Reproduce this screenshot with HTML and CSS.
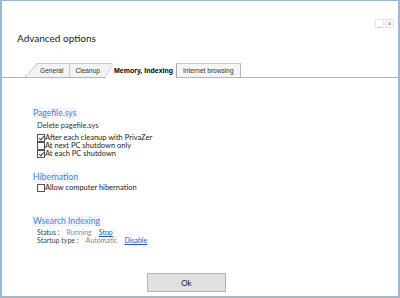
FILE: index.html
```html
<!DOCTYPE html>
<html lang="en">
<head>
    <meta charset="UTF-8">
    <title>Advanced options</title>
    <link rel="stylesheet" href="styles.css">
</head>
<body>
    <div class="window">
        <div class="controls">
            <span class="ctl ctl-min">_</span>
            <span class="ctl ctl-close">&#x2715;</span>
        </div>
        <h1 class="title">Advanced options</h1>
        <div class="tabs">
            <div class="tab tab-general">General</div>
            <div class="tab tab-cleanup">Cleanup</div>
            <div class="tab tab-active">Memory, Indexing</div>
            <div class="tab tab-internet">Internet browsing</div>
        </div>
        <div class="content">
            <div class="section section-pagefile">
                <div class="heading">Pagefile.sys</div>
                <div class="label">Delete pagefile.sys</div>
                <label class="check"><span class="box on"></span>After each cleanup with PrivaZer</label>
                <label class="check"><span class="box"></span>At next PC shutdown only</label>
                <label class="check"><span class="box on"></span>At each PC shutdown</label>
            </div>
            <div class="section section-hibernation">
                <div class="heading">Hibernation</div>
                <label class="check"><span class="box"></span>Allow computer hibernation</label>
            </div>
            <div class="section section-wsearch">
                <div class="heading">Wsearch Indexing</div>
                <div class="info"><span class="key">Status :</span><span class="val">Running</span><a class="link">Stop</a></div>
                <div class="info"><span class="key">Startup type :</span><span class="val">Automatic</span><a class="link">Disable</a></div>
            </div>
        </div>
        <div class="footer">
            <button class="btn-ok">Ok</button>
        </div>
    </div>
</body>
</html>
```

FILE: styles.css
```css
body {
    margin: 0;
    background-color: #fff;
    font-family: Lato, 'Open Sans', sans-serif;
}

.window {
    position: relative;
    width: 400px;
    height: 298px;
    box-sizing: border-box;
    border: 1px solid #9ab9d8;
    border-left-width: 2px;
    border-right-width: 2px;
    border-bottom: 2px solid #a9b6c2;
    background-color: #fff;
    display: flex;
    flex-direction: column;
}

.controls {
    position: absolute;
    top: 18px;
    right: 4px;
    display: flex;
    gap: 1px;
}

.ctl {
    width: 7px;
    height: 7px;
    border: 1px solid #e4e4e4;
    font-size: 6px;
    line-height: 7px;
    text-align: center;
    color: #888;
    font-family: 'DejaVu Sans', sans-serif;
}

.title {
    margin: 30px 0 0 15px;
    font-size: 10px;
    font-weight: normal;
    color: #222;
    line-height: 14px;
}

/* tabs */
.tabs {
    display: flex;
    align-items: flex-end;
    margin-top: 18px;
    padding-left: 23px;
    border-bottom: 1px solid #a8b8c8;
    height: 14px;
}

.tab {
    position: relative;
    font-family: 'Liberation Sans', Arial, sans-serif;
    font-size: 6.6px;
    color: #333;
    height: 13px;
    line-height: 13px;
    border-top: 1px solid #c8c8c8;
    background-color: #f3f3f3;
}

.tab-general {
    padding: 0 7px 0 15px;
    clip-path: polygon(12px 0, 100% 0, 100% 100%, 0 100%);
    background: linear-gradient(to bottom right, transparent calc(50% - 0.7px), #b4b4b4 50%, transparent calc(50% + 0.7px)) 0 0 / 12px 100% no-repeat, #f3f3f3;
}

.tab-cleanup {
    margin-left: -1px;
    padding: 0 12px 0 5px;
    border-left: 1px solid #c8c8c8;
}

.tab-active {
    z-index: 1;
    margin-left: -7px;
    margin-bottom: -1px;
    height: 15px;
    line-height: 15px;
    padding: 0 3px 0 9px;
    border-top: none;
    border-right: 1px solid #a8a8a8;
    font-weight: bold;
    font-size: 7px;
    color: #000;
    clip-path: polygon(8px 0, 100% 0, 100% 100%, 0 100%);
    background: linear-gradient(to bottom right, transparent calc(50% - 0.7px), #a8a8a8 50%, transparent calc(50% + 0.7px)) 0 0 / 8px 100% no-repeat, #fff;
}

.tab-internet {
    padding: 0 6px;
    border-right: 1px solid #b8b8b8;
    background-color: #f6f6f6;
}

/* content */
.content {
    flex: 1;
    padding: 30px 0 0 30px;
}

.section-pagefile {
    margin-bottom: 14px;
}

.section-hibernation {
    margin-bottom: 24px;
}

.heading {
    width: fit-content;
    font-size: 8.6px;
    color: #4683d6;
    background-color: #f2f6fc;
    line-height: 11px;
    padding: 0 1px;
    margin-bottom: 1px;
}

.label {
    font-size: 7.5px;
    color: #333;
    line-height: 11px;
    padding-left: 5px;
    margin-bottom: 2.5px;
}

.check {
    display: flex;
    align-items: center;
    font-size: 7.5px;
    color: #222;
    line-height: 8px;
    height: 8px;
    padding-left: 5px;
}

.box {
    width: 6px;
    height: 6px;
    border: 1px solid #555;
    background: #fff;
    position: relative;
}

.box.on::after {
    content: "";
    position: absolute;
    left: 2px;
    top: 0;
    width: 2px;
    height: 4px;
    border: solid #444;
    border-width: 0 1px 1px 0;
    transform: rotate(40deg);
}

.info {
    font-size: 7px;
    line-height: 8px;
    color: #444;
    padding-left: 5px;
    display: flex;
}

.heading + .info {
    margin-top: 1.5px;
}

.key {
    margin-right: 7px;
}

.val {
    color: #888;
    margin-right: 7px;
}

.link {
    color: #2255dd;
    text-decoration: underline;
}

/* footer */
.footer {
    display: flex;
    padding: 0 0 4px 145px;
}

.btn-ok {
    width: 79px;
    height: 19px;
    background-color: #e1e1e1;
    border: 1px solid #b5b5b5;
    font-family: Lato, sans-serif;
    font-size: 8px;
    color: #111;
}
```
